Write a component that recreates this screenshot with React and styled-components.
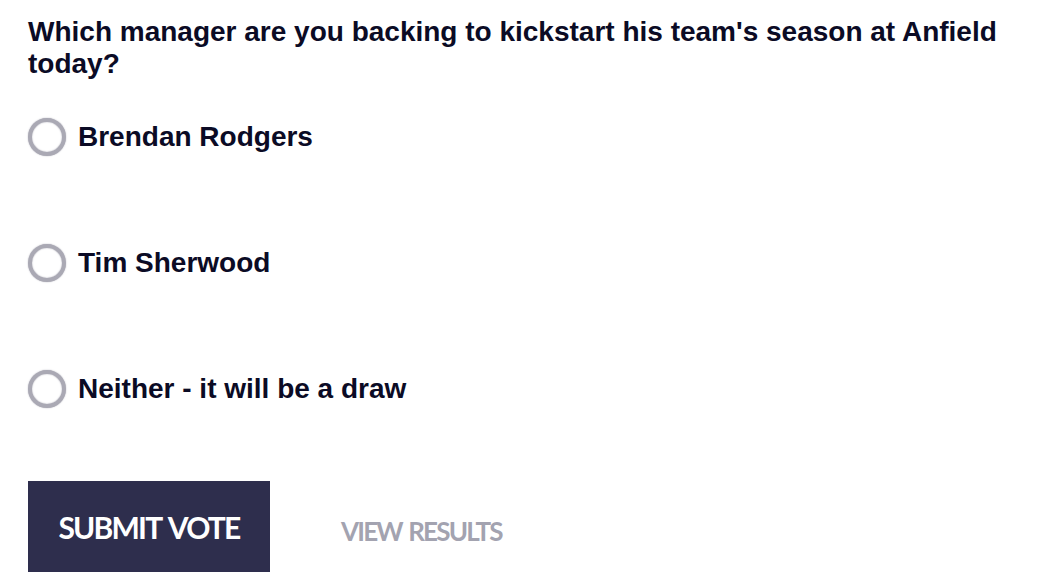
import React from 'react'
import styled, { createGlobalStyle } from 'styled-components'

const GlobalStyle = createGlobalStyle`
  body {
    margin: 0;
    background: #ffffff;
    font-family: "Liberation Sans", Arial, sans-serif;
  }
`

const options = ['Brendan Rodgers', 'Tim Sherwood', 'Neither - it will be a draw']

function App() {
    return (
        <>
            <GlobalStyle />
            <Poll>
                <Question>
                    Which manager are you backing to kickstart his team's season at Anfield today?
                </Question>
                <OptionList>
                    {options.map(o => (
                        <Option key={o}>
                            <Radio type="radio" name="poll" />
                            <OptionLabel>{o}</OptionLabel>
                        </Option>
                    ))}
                </OptionList>
                <Actions>
                    <SubmitBtn>SUBMIT VOTE</SubmitBtn>
                    <ResultsLink>VIEW RESULTS</ResultsLink>
                </Actions>
            </Poll>
        </>
    )
}

export default App

const Poll = styled.div`
    padding: 16px 28px 0 28px;
    width: 1000px;
    color: #0b0b25;
`

const Question = styled.h2`
    margin: 0;
    font-size: 28px;
    line-height: 32px;
    font-weight: bold;
`

const OptionList = styled.div`
    display: flex;
    flex-direction: column;
    gap: 88px;
    margin-top: 38px;
`

const Option = styled.label`
    display: flex;
    align-items: center;
    gap: 12px;
    height: 38px;
    cursor: pointer;
`

const Radio = styled.input`
    appearance: none;
    flex-shrink: 0;
    margin: 0;
    width: 38px;
    height: 38px;
    box-sizing: border-box;
    border-radius: 50%;
    border: 4px solid #aaa9b4;
    background: #fff;
    box-shadow: 0 0 1.5px #aaa9b4, inset 0 0 1.5px #aaa9b4;
`

const OptionLabel = styled.span`
    font-size: 28px;
    line-height: 32px;
    font-weight: bold;
    margin-top: -1px;
`

const Actions = styled.div`
    display: flex;
    align-items: center;
    margin-top: 73px;
`

const SubmitBtn = styled.button`
    width: 242px;
    height: 91px;
    padding: 0;
    border: none;
    background: #2e2e4d;
    color: #fff;
    font-family: Lato, "Open Sans", sans-serif;
    font-weight: 700;
    font-size: 30px;
    letter-spacing: -1.8px;
    word-spacing: 3px;
    cursor: pointer;
`

const ResultsLink = styled.a`
    margin-left: 71px;
    margin-top: 8px;
    color: #a3a3b0;
    font-family: Lato, "Open Sans", sans-serif;
    font-weight: 700;
    font-size: 26px;
    letter-spacing: -1.8px;
    word-spacing: 2px;
    cursor: pointer;
`
